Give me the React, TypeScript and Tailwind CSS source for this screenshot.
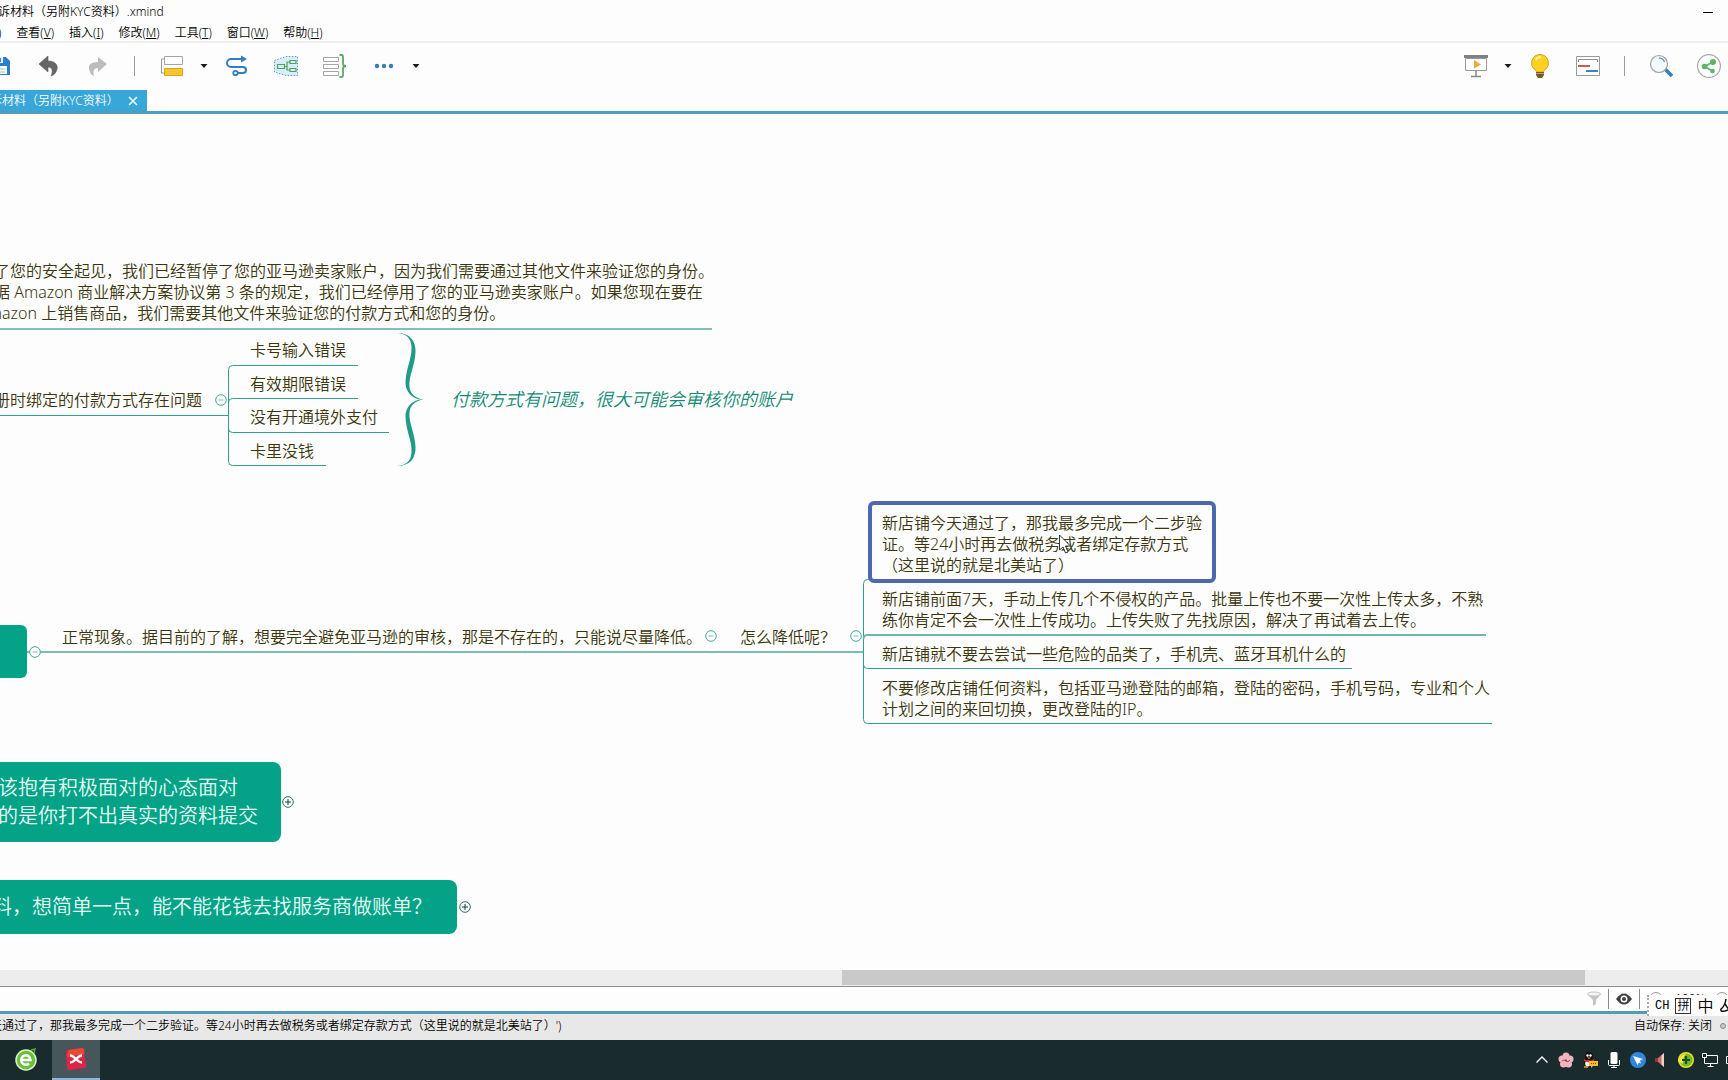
import type { ReactNode } from 'react';

interface TopicProps {
  className: string;
  lines: string[];
}

interface FoldProps {
  className: string;
  open?: boolean;
}

const menus = [
  { label: '查看', hotkey: 'V' },
  { label: '插入', hotkey: 'I' },
  { label: '修改', hotkey: 'M' },
  { label: '工具', hotkey: 'T' },
  { label: '窗口', hotkey: 'W' },
  { label: '帮助', hotkey: 'H' },
];

const halfBrace =
  'M397 219C410 219 416 227 415.500 238C415 252 408.500 262 409.500 273C410 280 416 284.500 423.500 285.500C413 286 405 278 405.500 268C406 254 412 244 411.500 233C411 224 407 220 397 219z';

function ToolButton({ label, children }: { label: string; children: ReactNode }) {
  return (
    <button type="button" aria-label={label} className="flex h-6 w-6 shrink-0 items-center justify-center">
      <svg className="h-6 w-6" viewBox="0 0 24 24" fill="none">
        {children}
      </svg>
    </button>
  );
}

function Caret({ label }: { label: string }) {
  return (
    <button type="button" aria-label={label} className="shrink-0">
      <svg className="h-2 w-2" viewBox="0 0 8 8">
        <path d="M0.5 2h7L4 6z" fill="#1a1a1a" />
      </svg>
    </button>
  );
}

function Separator() {
  return <span className="h-5 w-px shrink-0 bg-[#9a9a9a]" />;
}

// Text of a branch that sits on its own underline
function Topic({ className, lines }: TopicProps) {
  return (
    <div className={`absolute text-base leading-[21px] whitespace-nowrap text-[#3a350c] ${className}`}>
      {lines.map((line) => (
        <p key={line}>{line}</p>
      ))}
    </div>
  );
}

function Fold({ className, open = true }: FoldProps) {
  return (
    <button type="button" aria-label={open ? '折叠' : '展开'} className={`absolute h-3 w-3 ${className}`}>
      <svg className="h-3 w-3" viewBox="0 0 12 12" fill="none">
        <circle cx="6" cy="6" r="5.3" fill="#fdfdfd" stroke={open ? '#3fa899' : '#24736c'} />
        <path d={open ? 'M3.5 6h5' : 'M3 6h6M6 3v6'} stroke={open ? '#7fbfb6' : '#123c3c'} />
      </svg>
    </button>
  );
}

function Toolbar() {
  return (
    <div className="flex h-[47px] items-center justify-between pr-[7px] pb-[2px]">
      <div className="-ml-[13px] flex items-center gap-[25px]">
        <ToolButton label="保存">
          <path d="M1 3h18l4 4v14H1z" fill="#2b7fd0" />
          <path d="M5 3h11v6H5z" fill="#e8f2fb" />
          <path d="M12 4h2v4h-2z" fill="#2b7fd0" />
          <path d="M4 12h16v8H4z" fill="#fff" />
          <path d="M7 15h11M7 18h11" stroke="#8bbbe4" />
        </ToolButton>
        <ToolButton label="撤销">
          <path d="M12 2v5c7 0 10 4 9 8-1 4-3 6-6 7 2-4 2-9-3-9v5L3 10z" fill="#666" stroke="#555" strokeWidth="0.6" />
        </ToolButton>
        <ToolButton label="重做">
          <path d="M13 3v5C6 8 3 11 4 15c1 4 2 6 5 7-1-4-1-8 4-8v4l9-8z" fill="#bdbdbd" />
        </ToolButton>
        <Separator />
        <div className="-mr-2 flex items-center gap-4">
          <ToolButton label="主题">
            <path d="M5 5H1.500v14H5" stroke="#999" />
            <path d="M4.500 2.500h18v8h-18z" fill="#fff" stroke="#a5a5a5" />
            <path d="M4.500 14.500h18v7h-18z" fill="#f6c62d" stroke="#d8a51c" />
          </ToolButton>
          <Caret label="主题选项" />
        </div>
        <ToolButton label="联系">
          <path d="M17 5H6a4 4 0 0 0 0 8h12a3 3 0 0 1 0 6h-5" stroke="#2f7fbf" strokeWidth="2" />
          <path d="M16 1.500L22 5l-6 3.500z" fill="#2f7fbf" />
          <circle cx="10.500" cy="19" r="2.200" fill="#fff" stroke="#2f7fbf" strokeWidth="1.800" />
        </ToolButton>
        <ToolButton label="外框">
          <path d="M0.500 6.500L12 2.500h11.500v19H12L0.500 18z" fill="#d7eefa" stroke="#5a9bbd" strokeDasharray="1.500 1.500" />
          <path d="M3.500 10.500h7v4h-7zM16 6.500h6v3h-6zM16 14.500h6v3h-6zM10.500 12.500H13M16 8h-3v8h3" stroke="#55a060" strokeWidth="1.200" />
        </ToolButton>
        <ToolButton label="概要">
          <path d="M0.500 3.500h15v4h-15zM0.500 10.500h15v4h-15zM0.500 17.500h15v4h-15z" fill="#fff" stroke="#a5a5a5" />
          <path d="M16.500 1h2q1.500 0 1.500 1.500v7q0 2.500 3 2.500q-3 0-3 2.500v7q0 1.500-1.500 1.500h-2" stroke="#5aa865" strokeWidth="1.800" />
        </ToolButton>
        <div className="flex items-center gap-4">
          <ToolButton label="更多">
            <circle cx="5" cy="12" r="2.200" fill="#2f7fbf" />
            <circle cx="12" cy="12" r="2.200" fill="#2f7fbf" />
            <circle cx="19" cy="12" r="2.200" fill="#2f7fbf" />
          </ToolButton>
          <Caret label="更多选项" />
        </div>
      </div>

      <div className="flex items-center gap-6">
        <div className="-mr-2 flex items-center gap-4">
          <ToolButton label="演示">
            <path d="M1.500 4.500h21v12h-21z" fill="#fff" stroke="#999" />
            <path d="M0 1h24v3H0z" fill="#808080" />
            <path d="M10 6l7 4.500-7 4z" fill="#f0a640" />
            <path d="M12 17v5M7 22.500h10" stroke="#888" strokeWidth="1.500" />
          </ToolButton>
          <Caret label="演示选项" />
        </div>
        <ToolButton label="头脑风暴">
          <path d="M12 0.500a8.500 8.500 0 0 0-5 15.300c1 .8 1.500 1.700 1.500 2.200h7c0-.5.500-1.400 1.500-2.200A8.500 8.500 0 0 0 12 .5z" fill="#fbd023" stroke="#d6a51d" />
          <path d="M8 6a5 5 0 0 1 5-3" stroke="#fdf0a8" strokeWidth="2" />
          <path d="M8 18h8v3l-2 3h-4l-2-3z" fill="#6e5c28" />
          <path d="M8 19.500h8" stroke="#c0a55a" />
        </ToolButton>
        <ToolButton label="甘特图">
          <path d="M0.500 2.500h23v19h-23z" fill="#fff" stroke="#999" />
          <path d="M2.500 8V5.500h19V8" stroke="#8f8f8f" />
          <path d="M2 12h12" stroke="#c2604f" strokeWidth="2" />
          <path d="M10 17h12" stroke="#3585c0" strokeWidth="2" />
        </ToolButton>
        <Separator />
        <ToolButton label="搜索">
          <path d="M16 15l7 7" stroke="#2f7fbf" strokeWidth="3.500" />
          <circle cx="10" cy="10" r="8.500" fill="#f3f8fc" stroke="#a0a0a8" strokeWidth="1.200" />
          <path d="M10 4a6 6 0 0 1 5.500 4" stroke="#4b88b5" strokeWidth="1.200" />
        </ToolButton>
        <ToolButton label="分享">
          <circle cx="12" cy="12" r="11.400" fill="#fff" stroke="#a8a8a8" strokeWidth="1.200" />
          <path d="M16 8l-8.500 4.500L15.500 17" stroke="#5eb364" strokeWidth="1.800" />
          <circle cx="16" cy="8" r="3" fill="#5eb364" />
          <circle cx="7.500" cy="12.500" r="2.800" fill="#5eb364" />
          <circle cx="15.500" cy="17" r="2.300" fill="#5eb364" />
        </ToolButton>
      </div>
    </div>
  );
}

function MindMap() {
  return (
    <main className="relative min-h-0 flex-1 overflow-hidden bg-[#fdfdfd]">
      {/* Branch lines */}
      <svg className="absolute top-0 left-0 h-[860px] w-[1520px]" viewBox="0 0 1520 860" fill="none" stroke="#2fa08e">
        <path d="M0 215H712" stroke="#7fc0b8" strokeWidth="2" />
        <path d="M0 301.500H228.500" />
        <path d="M358 251.500H232.500q-4 0-4 4V347.500q0 4 4 4H326M358 284.500H232.500q-4 0-4 4M389 318.500H232.500q-4 0-4-4" />
        <g fill="#1f9c83" stroke="none">
          <path d={halfBrace} />
          <path d={halfBrace} transform="matrix(1 0 0 -1 0 571)" />
        </g>
        <path d="M27 538H863" stroke="#4fa99d" strokeWidth="1.500" />
        <path d="M870 465.500H867.500q-4 0-4 4V605.500q0 4 4 4H1492M1352 554.500H867.500q-4 0-4-4" />
        <path d="M1486 521H867.500q-4 0-4 4" stroke="#6bb9ae" strokeWidth="2" />
      </svg>

      <Topic
        className="top-[147px] -left-[22px]"
        lines={[
          '为了您的安全起见，我们已经暂停了您的亚马逊卖家账户，因为我们需要通过其他文件来验证您的身份。',
          '根据 Amazon 商业解决方案协议第 3 条的规定，我们已经停用了您的亚马逊卖家账户。如果您现在要在',
          'Amazon 上销售商品，我们需要其他文件来验证您的付款方式和您的身份。',
        ]}
      />
      <Topic className="top-[276px] -left-[22px]" lines={['注册时绑定的付款方式存在问题']} />
      <Fold className="top-[280px] left-[215px]" />
      <Topic className="top-[226px] left-[250px]" lines={['卡号输入错误']} />
      <Topic className="top-[260px] left-[250px]" lines={['有效期限错误']} />
      <Topic className="top-[293px] left-[250px]" lines={['没有开通境外支付']} />
      <Topic className="top-[327px] left-[250px]" lines={['卡里没钱']} />
      <p className="absolute top-[271px] left-[451px] text-lg whitespace-nowrap text-[#128a76] italic">
        付款方式有问题，很大可能会审核你的账户
      </p>

      <div className="absolute top-[511px] left-0 h-[53px] w-[27px] rounded-r-md bg-[#04a286]" />
      <Fold className="top-[532px] left-[29px]" />
      <Topic
        className="top-[513px] left-[62px]"
        lines={['正常现象。据目前的了解，想要完全避免亚马逊的审核，那是不存在的，只能说尽量降低。']}
      />
      <Fold className="top-[516px] left-[705px]" />
      <Topic className="top-[513px] left-[740px]" lines={['怎么降低呢？']} />
      <Fold className="top-[516px] left-[850px]" />

      {/* Selected topic */}
      <div className="absolute top-[387px] left-[868px] h-[82px] w-[348px] rounded-md border-4 border-[#4b69ab] bg-[#fdfdfd]" />
      <Topic
        className="top-[399px] left-[882px]"
        lines={['新店铺今天通过了，那我最多完成一个二步验', '证。等24小时再去做税务或者绑定存款方式', '（这里说的就是北美站了）']}
      />
      <Topic
        className="top-[475px] left-[882px]"
        lines={[
          '新店铺前面7天，手动上传几个不侵权的产品。批量上传也不要一次性上传太多，不熟',
          '练你肯定不会一次性上传成功。上传失败了先找原因，解决了再试着去上传。',
        ]}
      />
      <Topic className="top-[530px] left-[882px]" lines={['新店铺就不要去尝试一些危险的品类了，手机壳、蓝牙耳机什么的']} />
      <Topic
        className="top-[564px] left-[882px]"
        lines={['不要修改店铺任何资料，包括亚马逊登陆的邮箱，登陆的密码，手机号码，专业和个人', '计划之间的来回切换，更改登陆的IP。']}
      />

      {/* Main topics */}
      <div className="absolute top-[648px] left-0 flex h-20 w-[281px] flex-col justify-center rounded-r-lg bg-[#04a286] text-xl whitespace-nowrap text-[#e3fff8]">
        <p className="-ml-[2px]">该抱有积极面对的心态面对</p>
        <p className="-ml-[2px]">的是你打不出真实的资料提交</p>
      </div>
      <Fold className="top-[682px] left-[282px]" open={false} />
      <div className="absolute top-[766px] left-0 flex h-[54px] w-[457px] items-center rounded-r-lg bg-[#04a286] text-xl whitespace-nowrap text-[#e3fff8]">
        <p className="-ml-2">料，想简单一点，能不能花钱去找服务商做账单？</p>
      </div>
      <Fold className="top-[787px] left-[459px]" open={false} />

      {/* Mouse pointer */}
      <svg className="absolute top-[420px] left-[1059px] h-5 w-3" viewBox="0 0 12 20">
        <path d="M0.500 1v15l3.500-3 2.500 6 2.500-1-2.500-6h5z" fill="#fff" stroke="#333" />
      </svg>
    </main>
  );
}

function Taskbar() {
  return (
    <footer className="flex h-10 items-center justify-between overflow-hidden bg-[#1a2b2e]">
      <div className="flex h-full items-center">
        <button type="button" aria-label="浏览器" className="flex h-full w-[52px] items-center justify-center">
          <svg className="h-6 w-6" viewBox="0 0 24 24" fill="none">
            <circle cx="12" cy="12" r="10" fill="#6cbf3c" stroke="#d9f5c4" strokeWidth="1.500" />
            <path d="M8 12h8.500a4.700 4.700 0 1 0-1.500 3.500" stroke="#fff" strokeWidth="2.500" />
            <path d="M17 2l4-1-1 4" stroke="#58a838" strokeWidth="1.500" />
          </svg>
        </button>
        <button type="button" aria-label="XMind" className="flex h-full w-12 items-center justify-center border-b-2 border-[#8db6dc] bg-[#47565b]">
          <svg className="h-6 w-6" viewBox="0 0 24 24" fill="none">
            <path d="M2 5Q2 3 4 3L18 1Q20 1 20 3L22 19Q22 21 20 21L5 23Q3 23 3 21z" fill="#df2547" />
            <path d="M5 3l13-2q2 0 2 2l.5 4L3 10z" fill="#ea4a35" />
            <path d="M6 8.500q2.500 0 6 3.500t6 3.500M18 8.500q-2.500 0-6 3.500t-6 3.500" stroke="#fff" strokeWidth="2.400" />
          </svg>
        </button>
      </div>
      <div className="-mr-[14px] flex items-center gap-2">
        <svg className="h-4 w-4" viewBox="0 0 16 16" fill="none">
          <path d="M2.500 10.500L8 5l5.500 5.500" stroke="#fff" strokeWidth="1.300" />
        </svg>
        <svg className="h-4 w-4" viewBox="0 0 16 16" fill="#f3b4bd">
          <circle cx="8" cy="4" r="3.500" />
          <circle cx="12" cy="7" r="3.500" />
          <circle cx="10.500" cy="12" r="3.500" />
          <circle cx="5.500" cy="12" r="3.500" />
          <circle cx="4" cy="7" r="3.500" />
          <path d="M4 9q2-2 4 0t4-1" stroke="#9a4a5a" fill="none" />
        </svg>
        <svg className="h-4 w-4" viewBox="0 0 16 16">
          <ellipse cx="7" cy="10" rx="5" ry="5.500" fill="#111" />
          <ellipse cx="7" cy="4.500" rx="4" ry="4.500" fill="#111" />
          <circle cx="5.500" cy="3.500" r="1.200" fill="#fff" />
          <circle cx="8.500" cy="3.500" r="1.200" fill="#fff" />
          <path d="M5 5.500h4L7 7z" fill="#f5a623" />
          <ellipse cx="6" cy="11.500" rx="2.800" ry="3" fill="#fff" />
          <path d="M2 7q5 3 10 0v2q-5 2.500-10 0z" fill="#d93025" />
          <path d="M7 9h9v5h-5l-2 2v-2H7z" fill="#f7b733" />
          <path d="M9 11.500h1M11 11.500h1M13 11.500h1" stroke="#7a4a00" />
          <path d="M2 15h4" stroke="#f5a623" strokeWidth="1.500" />
        </svg>
        <svg className="h-4 w-4" viewBox="0 0 16 16" fill="none">
          <rect x="4.500" y="0" width="7" height="12" rx="1.500" fill="#fff" />
          <path d="M2.500 8v4.500q0 1 1 1h9q1 0 1-1V8M8 13.500V16M5 15.500h6" stroke="#fff" />
        </svg>
        <svg className="h-4 w-4" viewBox="0 0 16 16">
          <circle cx="8" cy="8" r="8" fill="#2f87e0" />
          <path d="M3 4l10 3-3 1.500 1 3-2-1-1.500 2.500z" fill="#fff" />
        </svg>
        <svg className="h-4 w-4" viewBox="0 0 16 16">
          <path d="M1 6h3v4H1z" fill="#8e3b33" />
          <path d="M4 6l6-5v14l-6-5z" fill="#c9705c" />
          <path d="M7.500 3.500L10 1v14l-2.500-2.500z" fill="#f0d0c6" />
        </svg>
        <svg className="h-4 w-4" viewBox="0 0 16 16" fill="none">
          <circle cx="8" cy="8" r="8" fill="#f1dc2b" />
          <circle cx="8" cy="8" r="6.500" fill="#6dbb2c" />
          <path d="M0 9Q2 3 9 1 4 5 5 12z" fill="#f5e640" />
          <path d="M8 4v8M4 8h8" stroke="#1e4d16" strokeWidth="2.200" />
        </svg>
        <svg className="h-4 w-4" viewBox="0 0 16 16" fill="none" stroke="#fff">
          <path d="M4 3.500h11.500v8H2.500V7M8.500 11.500v3M5.500 14.500h6" />
          <path d="M0.500 1.500h4v4h-4zM2.500 5.500V8" />
        </svg>
        <svg className="h-4 w-4" viewBox="0 0 16 16" fill="none" stroke="#fff">
          <path d="M0.500 4.500h14v7h-14z" />
        </svg>
      </div>
    </footer>
  );
}

export default function App() {
  return (
    <div className="relative flex h-screen flex-col overflow-hidden bg-[#fdfdfd] font-['Noto_Sans','Noto_Sans_CJK_SC',sans-serif] font-[350] text-black">
      {/* Title and menu */}
      <header className="flex h-[43px] flex-col border-b-2 border-[#eeeeee] text-xs whitespace-nowrap">
        <div className="flex h-6 items-center justify-between pr-[15px]">
          <h1 className="-ml-[2px] font-[350]">诉材料（另附KYC资料）.xmind</h1>
          <button type="button" aria-label="最小化" className="flex h-5 w-[10px] items-center">
            <span className="h-px w-full bg-black" />
          </button>
        </div>
        <nav className="-ml-[2px] flex items-center gap-[15px] leading-[17px]">
          <span>)</span>
          {menus.map((menu) => (
            <button key={menu.hotkey} type="button">
              {menu.label}(<u>{menu.hotkey}</u>)
            </button>
          ))}
        </nav>
      </header>

      <Toolbar />

      {/* Document tab */}
      <div className="flex h-6 border-b-[3px] border-[#4f9db8] text-xs">
        <div className="flex w-[147px] items-center justify-between overflow-hidden bg-[#37a6d8] pr-2 whitespace-nowrap text-white">
          <span className="-ml-[10px]">诉材料（另附KYC资料）</span>
          <button type="button" aria-label="关闭" className="h-3 w-3">
            <svg className="h-3 w-3" viewBox="0 0 12 12">
              <path d="M2 2l8 8M10 2l-8 8" stroke="#fff" strokeWidth="1.500" />
            </svg>
          </button>
        </div>
      </div>

      <MindMap />

      {/* Horizontal scrollbar */}
      <div className="flex h-[17px] border-b border-[#8e8e8e] bg-[#ededed] pb-px">
        <div className="ml-[48.7%] w-[43%] bg-[#c9c9c9]" />
      </div>

      <div className="flex h-[27px] items-center justify-end border-b-[3px] border-[#559bb8] bg-[#fdfdfd]">
        <button type="button" aria-label="筛选" className="mr-[6px] h-4 w-4">
          <svg className="h-4 w-4" viewBox="0 0 16 16" fill="#c4c4c4">
            <path d="M1 3l6 6v6l3-2V9l5-6z" />
            <ellipse cx="8" cy="3" rx="6.500" ry="2" fill="#f4f4f4" stroke="#c4c4c4" />
          </svg>
        </button>
        <span className="h-5 w-px bg-[#8a8a8a]" />
        <button type="button" aria-label="显示" className="mx-[7px] h-4 w-4">
          <svg className="h-4 w-4" viewBox="0 0 16 16">
            <path d="M0 8q8-11 16 0-8 11-16 0z" fill="#3f3f3f" />
            <circle cx="8" cy="8" r="3.500" fill="#fff" />
            <circle cx="8" cy="8" r="2" fill="#3f3f3f" />
          </svg>
        </button>
        <span className="mr-[9px] h-5 w-px bg-[#8a8a8a]" />
        <button type="button" aria-label="缩小" className="h-[14px] w-[14px] rounded-full border border-[#999999]" />
        <span className="mx-3 w-[28px] text-xs leading-4">100%</span>
        <button type="button" aria-label="放大" className="-mr-px h-[14px] w-[14px] rounded-full border border-[#999999]" />
      </div>

      {/* Status line */}
      <div className="flex h-[26px] items-center justify-between overflow-hidden bg-[#e8e8e8] pb-[2px] text-xs whitespace-nowrap">
        <p className="-ml-[10px]">天通过了，那我最多完成一个二步验证。等24小时再去做税务或者绑定存款方式（这里说的就是北美站了）')</p>
        <div className="flex items-center gap-[8px] pr-[2px]">
          <span>自动保存: 关闭</span>
          <span className="h-[6px] w-[6px] rounded-full border border-[#8a8a8a] bg-[#c8c8c8]" />
        </div>
      </div>

      {/* Floating input method bar */}
      <div className="absolute right-0 bottom-16 flex h-[21px] w-[81px] items-center gap-[6px] overflow-hidden border-l-2 border-dotted border-[#aaaaaa] bg-[#fdfdfd] pl-[6px] whitespace-nowrap">
        <span className="font-['Liberation_Mono',monospace] text-xs">CH</span>
        <span className="h-4 w-4 shrink-0 border border-[#333333] text-center text-xs leading-[14px]">拼</span>
        <span className="text-base leading-5">中</span>
        <svg className="h-4 w-4 shrink-0" viewBox="0 0 16 16" fill="none" stroke="#111" strokeWidth="1.500">
          <path d="M7 1Q6 8 2 11Q1 14 6 13L9 12M6 6l4 6" />
        </svg>
      </div>

      <Taskbar />
    </div>
  );
}
